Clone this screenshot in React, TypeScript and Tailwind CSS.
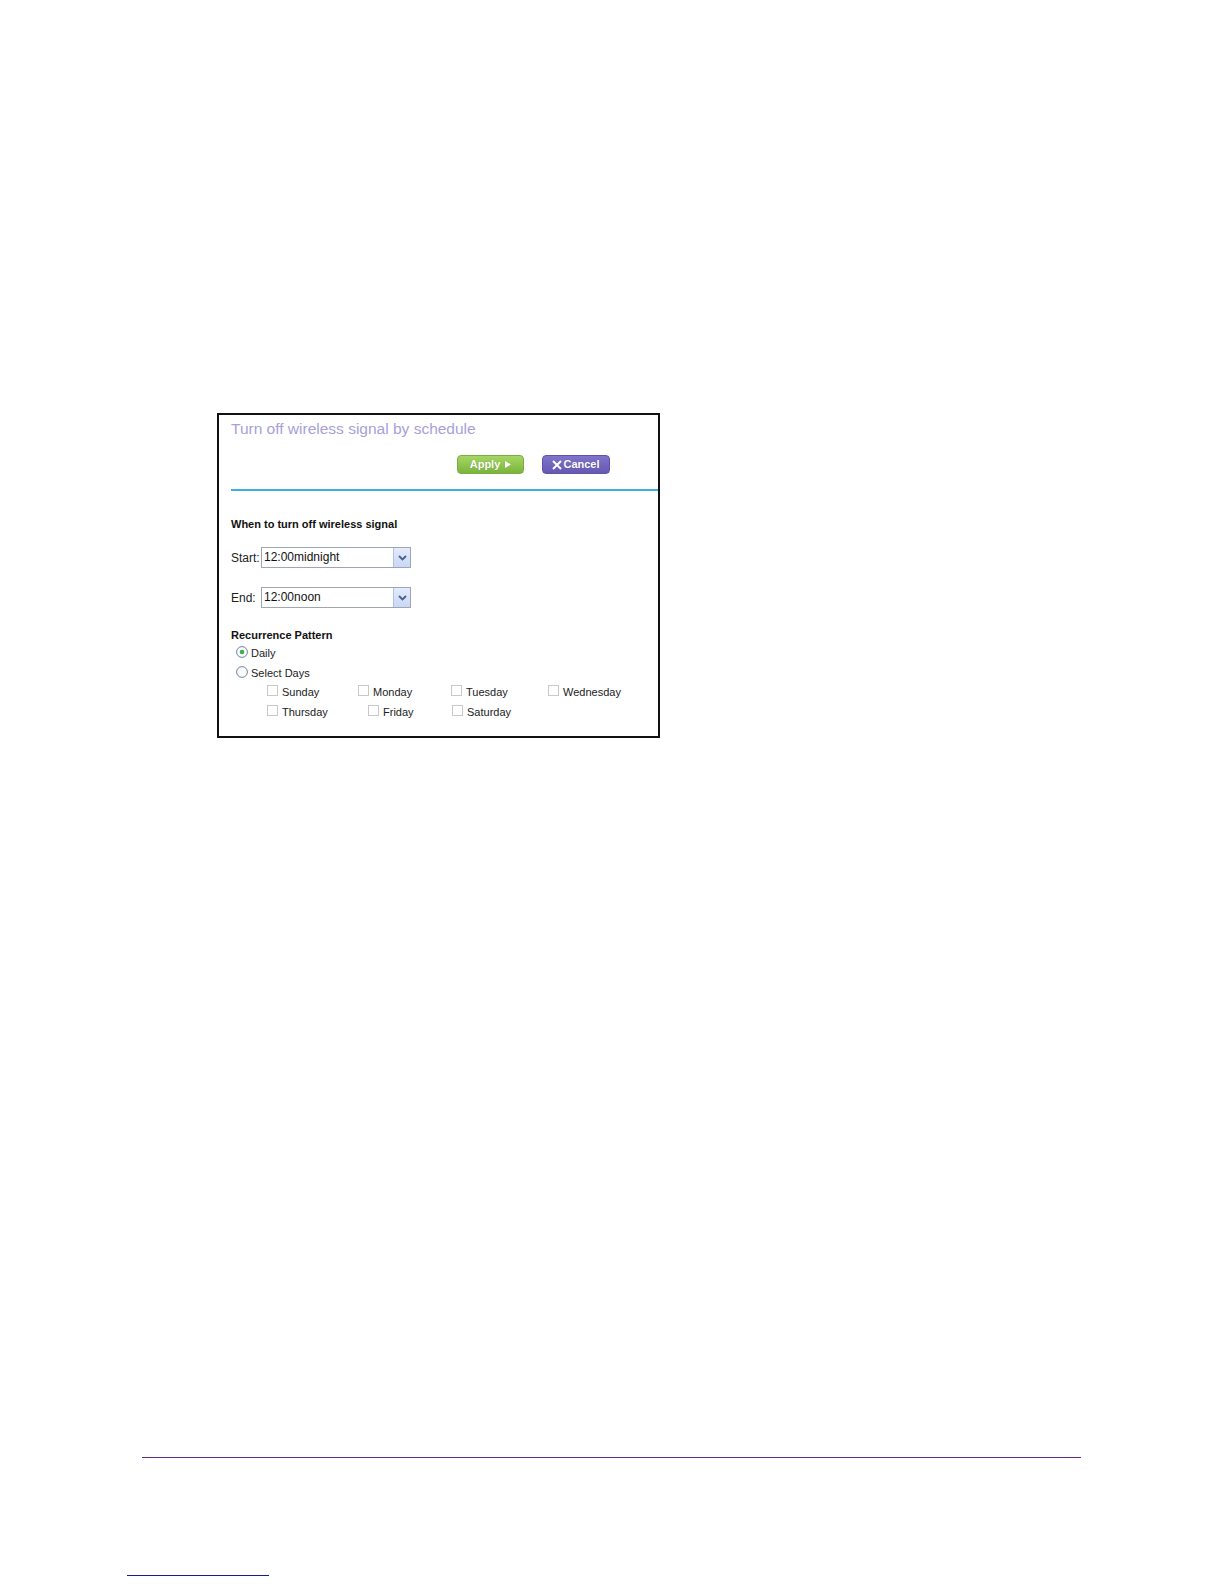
const DAYS_ROW_1 = [
  { label: "Sunday", w: "w-[91px]" },
  { label: "Monday", w: "w-[93px]" },
  { label: "Tuesday", w: "w-[97px]" },
  { label: "Wednesday", w: "w-[90px]" },
]

const DAYS_ROW_2 = [
  { label: "Thursday", w: "w-[101px]" },
  { label: "Friday", w: "w-[84px]" },
  { label: "Saturday", w: "w-[90px]" },
]

function Checkbox({ label, w }: { label: string; w: string }) {
  return (
    <div className={`flex items-center gap-[4px] ${w}`}>
      <span className="block w-[11px] h-[11px] border border-[#c9c9c9] bg-white -mt-[3px]" />
      <span className="text-[11px] leading-[14px] text-[#222]">{label}</span>
    </div>
  )
}

function Radio({ checked, label }: { checked?: boolean; label: string }) {
  return (
    <div className="flex items-center h-[14px] ml-[5px] gap-[3px]">
      <svg width="12" height="12" viewBox="0 0 12 12" className="-mt-[3px]">
        <circle cx="6" cy="6" r="5.4" fill="#fbfbfb" stroke="#6f84a3" strokeWidth="1" />
        {checked && <circle cx="6" cy="6" r="2.3" fill="#3fae4b" />}
      </svg>
      <span className="text-[11px] leading-[14px] text-[#222]">{label}</span>
    </div>
  )
}

function Select({ value }: { value: string }) {
  return (
    <div className="flex w-[150px] h-[21px] border border-[#9ea6b2] bg-white">
      <span className="flex-1 text-[12px] leading-[19px] pl-[2px] text-[#111]">{value}</span>
      <span className="flex items-center justify-center w-[17px] h-full bg-gradient-to-b from-[#e3ebfc] to-[#c9d8f6] border-l border-[#b3c4e4]">
        <svg width="9" height="6" viewBox="0 0 9 6">
          <path d="M1 1 L4.5 4.5 L8 1" fill="none" stroke="#4b5e86" strokeWidth="1.8" />
        </svg>
      </span>
    </div>
  )
}

export default function App() {
  return (
    <div className="bg-white w-[1224px] h-[1584px] pt-[413px] font-['Liberation_Sans',Arial,sans-serif]">
      <div className="ml-[217px] w-[443px] h-[325px] border-2 border-[#111] pl-[12px]">
        <h1 className="mt-[5px] text-[15.5px] leading-[18px] text-[#a7a1d7]">
          Turn off wireless signal by schedule
        </h1>

        <div className="mt-[17px] flex h-[19px] pl-[226px] gap-[18px]">
          <button className="flex items-center justify-center gap-[5px] w-[67px] h-[19px] rounded-[4px] bg-gradient-to-b from-[#a6d663] to-[#7ab43c] border border-[#7aae40] text-white text-[11px] font-bold [text-shadow:0_0_1px_rgba(0,0,0,0.25)]">
            Apply
            <svg width="6" height="7" viewBox="0 0 6 7">
              <path d="M0 0 L6 3.5 L0 7 Z" fill="#fff" />
            </svg>
          </button>
          <button className="flex items-center justify-center gap-[1px] w-[68px] h-[19px] rounded-[4px] bg-gradient-to-b from-[#8073cc] to-[#6659b3] border border-[#5f53a8] text-white text-[11px] font-bold [text-shadow:0_0_1px_rgba(0,0,0,0.25)]">
            <svg width="10" height="10" viewBox="0 0 10 10">
              <path d="M1 1 L9 9 M9 1 L1 9" stroke="#fff" strokeWidth="2" />
            </svg>
            Cancel
          </button>
        </div>

        <div className="mt-[15px] h-[2px] bg-[#3aafe0]" />

        <div className="mt-[26px] text-[11px] leading-[14px] font-bold text-[#111]">
          When to turn off wireless signal
        </div>

        <div className="mt-[16px] flex items-center">
          <span className="w-[30px] text-[12px] text-[#222]">Start:</span>
          <Select value="12:00midnight" />
        </div>

        <div className="mt-[19px] flex items-center">
          <span className="w-[30px] text-[12px] text-[#222]">End:</span>
          <Select value="12:00noon" />
        </div>

        <div className="mt-[20px] text-[11px] leading-[14px] font-bold text-[#111]">
          Recurrence Pattern
        </div>

        <div className="mt-[4px]">
          <Radio checked label="Daily" />
        </div>
        <div className="mt-[6px]">
          <Radio label="Select Days" />
        </div>

        <div className="mt-[5px] flex pl-[36px]">
          {DAYS_ROW_1.map((d) => (
            <Checkbox key={d.label} label={d.label} w={d.w} />
          ))}
        </div>
        <div className="mt-[6px] flex pl-[36px]">
          {DAYS_ROW_2.map((d) => (
            <Checkbox key={d.label} label={d.label} w={d.w} />
          ))}
        </div>
      </div>

      <div className="mt-[719px] ml-[142px] w-[939px] h-px bg-[#5a2d82]" />
      <div className="mt-[117px] ml-[127px] w-[142px] h-px bg-[#1b1a8a]" />
    </div>
  )
}
